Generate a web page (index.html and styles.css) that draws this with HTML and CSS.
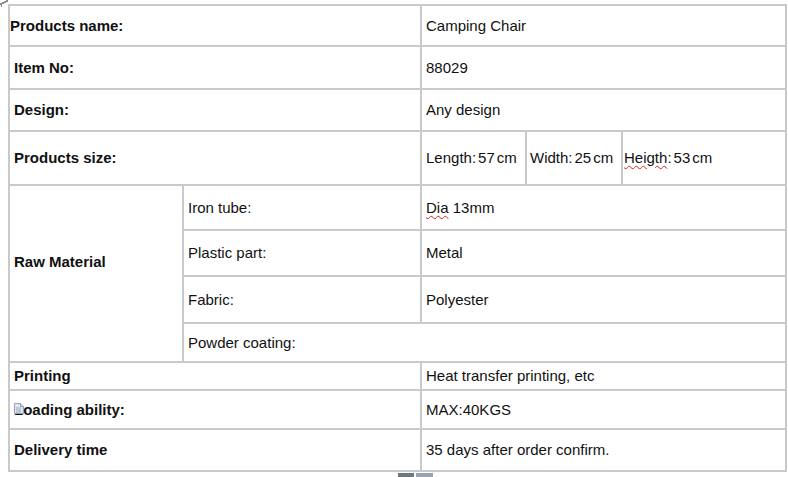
FILE: index.html
```html
<!DOCTYPE html>
<html>
<head>
<meta charset="utf-8">
<link rel="stylesheet" href="styles.css">
</head>
<body>
<div class="page">
  <svg class="move-handle" width="9" height="7" viewBox="0 0 9 7"><g fill="#8a8a8a"><rect x="0" y="3" width="2" height="2"/><rect x="2" y="2" width="2" height="2"/><rect x="4" y="1" width="2" height="2"/><rect x="6" y="0" width="2" height="2"/><rect x="1" y="5" width="1" height="2"/></g></svg>
  <table class="spec">
    <colgroup>
      <col class="c1"><col class="c2"><col class="c3"><col class="c4"><col class="c5">
    </colgroup>
    <tr class="r1">
      <td colspan="2" class="label first">Products name:</td>
      <td colspan="3" class="val">Camping Chair</td>
    </tr>
    <tr class="r2">
      <td colspan="2" class="label">Item No:</td>
      <td colspan="3" class="val">88029</td>
    </tr>
    <tr class="r3">
      <td colspan="2" class="label">Design:</td>
      <td colspan="3" class="val">Any design</td>
    </tr>
    <tr class="r4">
      <td colspan="2" class="label">Products size:</td>
      <td class="val">Length:<span class="num">57</span>cm</td>
      <td class="val tight">Width:<span class="num">25</span>cm</td>
      <td class="val tighter"><span class="spell">Heigth</span>:<span class="num">53</span>cm</td>
    </tr>
    <tr class="r5">
      <td rowspan="4" class="label raw">Raw Material</td>
      <td class="sub">Iron tube:</td>
      <td colspan="3" class="val"><span class="spell">Dia</span> 13mm</td>
    </tr>
    <tr class="r6">
      <td class="sub">Plastic part:</td>
      <td colspan="3" class="val">Metal</td>
    </tr>
    <tr class="r7">
      <td class="sub">Fabric:</td>
      <td colspan="3" class="val">Polyester</td>
    </tr>
    <tr class="r8">
      <td colspan="4" class="sub">Powder coating:</td>
    </tr>
    <tr class="r9">
      <td colspan="2" class="label">Printing</td>
      <td colspan="3" class="val">Heat transfer printing, etc</td>
    </tr>
    <tr class="r10">
      <td colspan="2" class="label load">Loading ability:<svg class="doc-icon" width="10" height="11" viewBox="0 0 10 11"><path d="M0.5 0.5h6l3 3v7h-9z" fill="#dfe6f0" stroke="#8fa0b8"/><path d="M6.5 0.5v3h3" fill="#c8d2e0" stroke="#8fa0b8"/><path d="M2 5h5M2 7h5M2 9h5" stroke="#9aa8bc"/></svg></td>
      <td colspan="3" class="val">MAX:40KGS</td>
    </tr>
    <tr class="r11">
      <td colspan="2" class="label">Delivery time</td>
      <td colspan="3" class="val">35 days after order confirm.</td>
    </tr>
  </table>
  <div class="scroll-marks"><span class="mark dark"></span><span class="mark light"></span></div>
</div>
</body>
</html>
```
FILE: styles.css
```css
html, body {
  margin: 0;
  padding: 0;
  background: #ffffff;
}
body {
  width: 788px;
  height: 477px;
  overflow: hidden;
  font-family: "Liberation Sans", Arial, sans-serif;
  color: #111111;
}
.page {
  position: relative;
  width: 788px;
  height: 477px;
  padding: 4px 0 0 8px;
  box-sizing: border-box;
}
.move-handle {
  position: absolute;
  left: 0;
  top: 0;
}
.spec {
  border-collapse: collapse;
  table-layout: fixed;
  width: 777px;
  font-size: 15px;
  line-height: 17px;
}
.spec td {
  border: 2px solid #c9c9c9;
  padding: 0 4px 1px 4px;
  vertical-align: middle;
  white-space: nowrap;
  overflow: visible;
}
col.c1 { width: 174px; }
col.c2 { width: 238px; }
col.c3 { width: 105px; }
col.c4 { width: 96px; }
col.c5 { width: 164px; }

.r1 { height: 41px; }
.r2 { height: 43px; }
.r3 { height: 42px; }
.r4 { height: 54px; }
.r5 { height: 45px; }
.r6 { height: 46px; }
.r7 { height: 47px; }
.r8 { height: 39px; }
.r9 { height: 28px; }
.r10 { height: 39px; }
.r11 { height: 42px; }

.label {
  font-weight: bold;
}
.spec td.label.first {
  padding-left: 0;
}
.spec td.label.raw {
  padding-bottom: 24px;
}
.label.load {
  position: relative;
}
.doc-icon {
  position: absolute;
  left: 4px;
  top: 12px;
}
.spec td.sub, .spec td.val {
  padding-left: 4px;
}
.spec td.val.tight {
  padding-left: 3px;
}
.spec td.val.tighter {
  padding-left: 1px;
}
.num {
  margin: 0 2px;
}
.spell {
  text-decoration: underline wavy #d22;
  text-decoration-thickness: 1px;
  text-underline-offset: 2px;
}
.scroll-marks {
  position: absolute;
  left: 398px;
  top: 473px;
  display: flex;
  gap: 2px;
}
.mark {
  display: block;
  height: 4px;
}
.mark.dark {
  width: 16px;
  background: #6f7780;
}
.mark.light {
  width: 17px;
  background: #9aa4b0;
}
```
